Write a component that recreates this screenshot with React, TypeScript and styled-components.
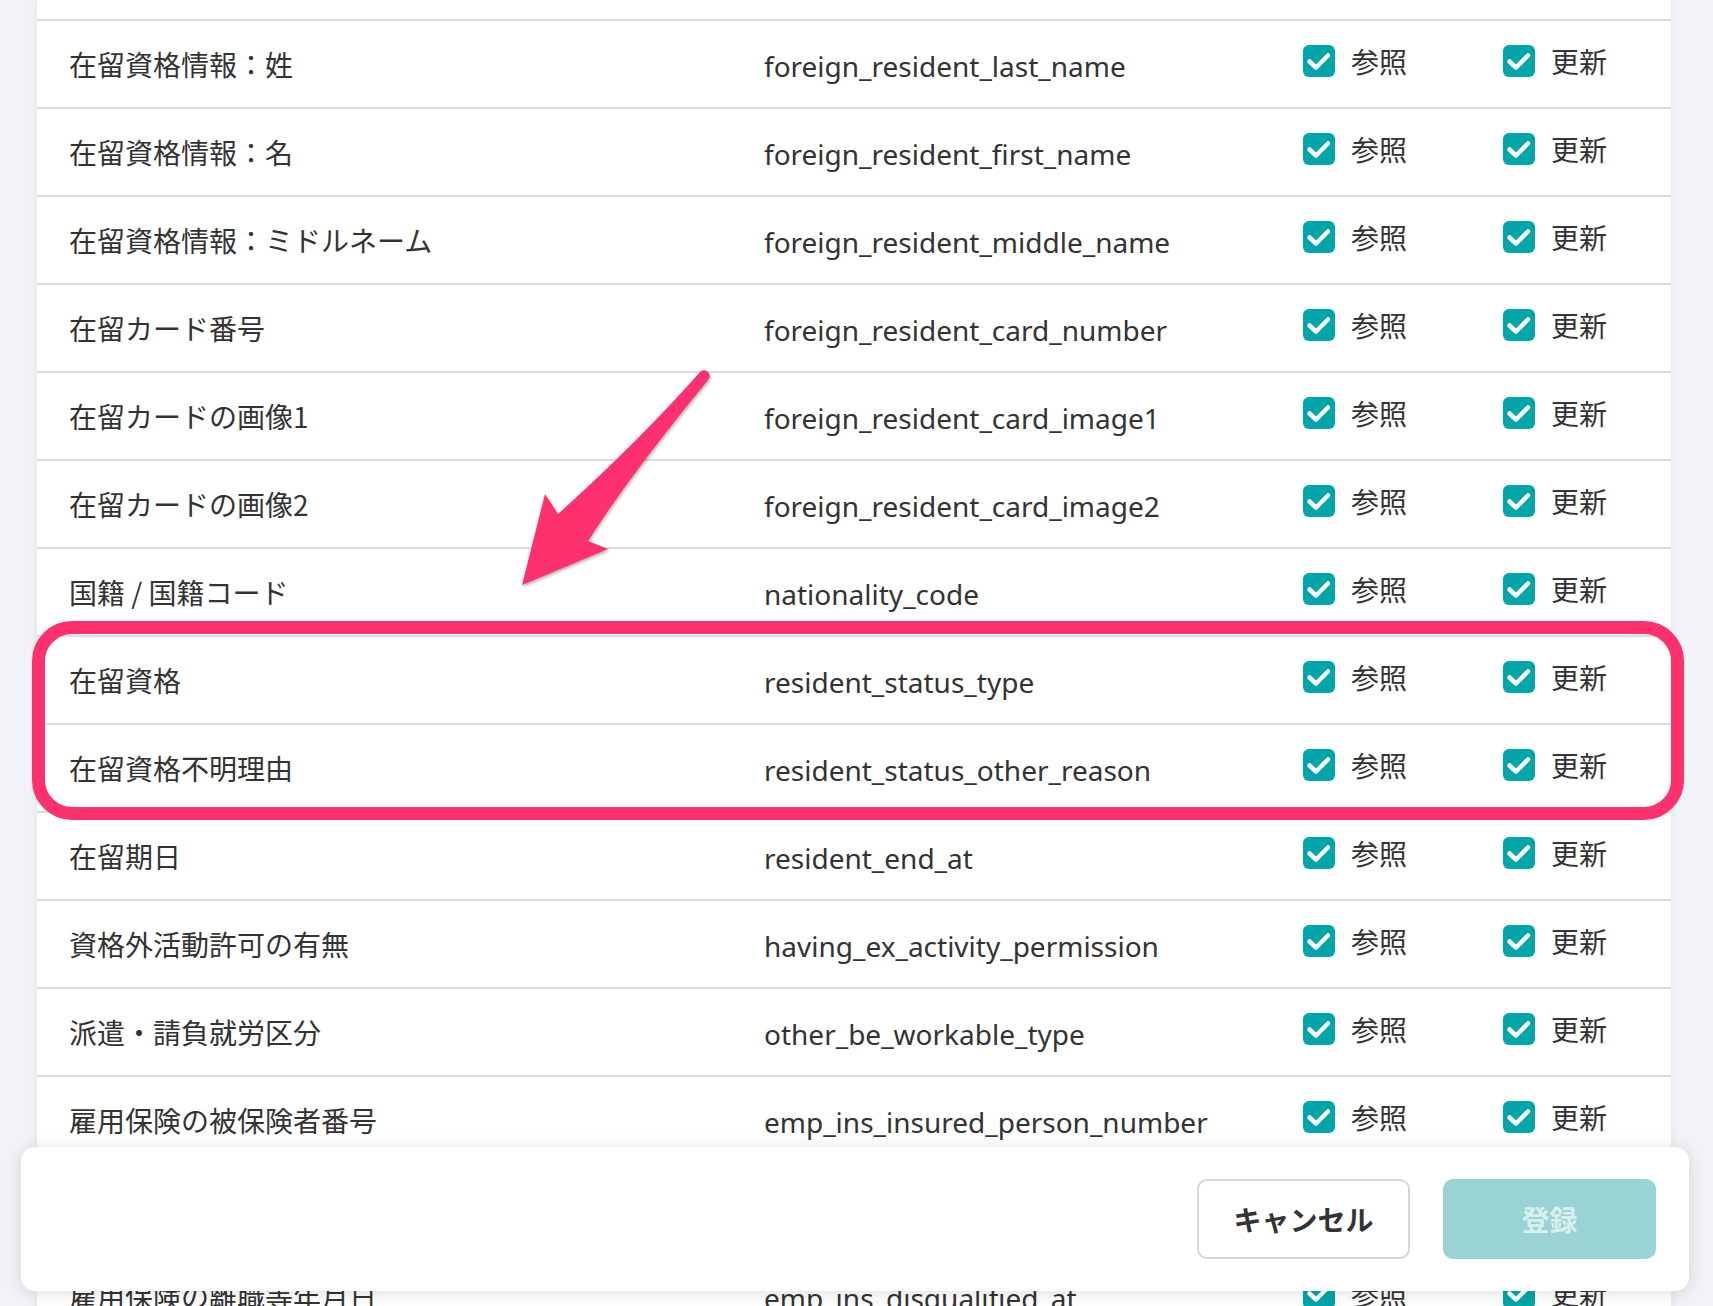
import React from "react";
import styled, { createGlobalStyle } from "styled-components";

const GlobalStyle = createGlobalStyle`
  html, body {
    margin: 0;
    padding: 0;
    background: #f2f3f7;
  }
  body {
    font-family: "Noto Sans", "Noto Sans CJK JP", sans-serif;
    color: #333;
  }
  * { box-sizing: border-box; }
`;

const Page = styled.div`
  position: relative;
  height: 1306px;
  overflow: hidden;
  background: #f2f3f7;
  padding: 0 42px 0 37px;
`;

const Card = styled.div`
  background: #fff;
  box-shadow: 0 0 10px rgba(0, 0, 0, 0.07);
`;

const RowTail = styled.div`
  height: 21px;
  border-bottom: 2px solid #dcdcdc;
`;

const Row = styled.div`
  display: grid;
  grid-template-columns: 695px 539px 200px 1fr;
  align-items: center;
  height: 88px;
  padding-left: 32px;
  border-bottom: 2px solid #dcdcdc;
  font-size: 28px;
  line-height: 1;
`;

const Label = styled.div`
  font-family: "Noto Sans CJK JP", sans-serif;
  color: #333;
  white-space: nowrap;
`;

const Field = styled.div`
  font-family: "Noto Sans", "Noto Sans CJK JP", sans-serif;
  color: #333;
  padding-top: 3px;
  white-space: nowrap;
`;

const CheckCell = styled.label`
  display: flex;
  align-items: center;
  gap: 16px;
  margin-bottom: 6px;
  font-family: "Noto Sans CJK JP", sans-serif;
  color: #333;
`;

const Footer = styled.div`
  position: absolute;
  left: 21px;
  right: 24px;
  bottom: 15px;
  height: 144px;
  background: #fff;
  border-radius: 14px;
  box-shadow: 0 2px 18px rgba(0, 0, 0, 0.13);
  display: flex;
  justify-content: flex-end;
  align-items: center;
  gap: 33px;
  padding: 0 33px;
`;

const Button = styled.button<{ $primary?: boolean }>`
  width: 213px;
  height: 80px;
  border-radius: 10px;
  font-family: "Noto Sans CJK JP", sans-serif;
  font-weight: 700;
  font-size: 28px;
  cursor: pointer;
  border: ${(p) => (p.$primary ? "none" : "2px solid #d6d6d6")};
  background: ${(p) => (p.$primary ? "#99d3d4" : "#fff")};
  color: ${(p) => (p.$primary ? "#d8efef" : "#333")};
`;

const Highlight = styled.div`
  position: absolute;
  left: 32px;
  top: 621px;
  width: 1652px;
  height: 199px;
  border: 13px solid #ff306e;
  border-radius: 40px;
  pointer-events: none;
`;

const Arrow = styled.svg`
  position: absolute;
  left: 500px;
  top: 360px;
  width: 220px;
  height: 240px;
  overflow: visible;
  filter: drop-shadow(1px 2px 1.5px rgba(0, 0, 0, 0.3));
  pointer-events: none;
`;

const CheckIcon = () => (
  <svg width="32" height="32" viewBox="0 0 32 32">
    <rect x="0" y="0" width="32" height="32" rx="6" fill="#00a5a9" />
    <path
      d="M6.5 16.5 L13 22.5 L25 10.5"
      fill="none"
      stroke="#fff"
      strokeWidth="4.5"
      strokeLinecap="round"
      strokeLinejoin="round"
    />
  </svg>
);

const rows: [string, string][] = [
  ["在留資格情報：姓", "foreign_resident_last_name"],
  ["在留資格情報：名", "foreign_resident_first_name"],
  ["在留資格情報：ミドルネーム", "foreign_resident_middle_name"],
  ["在留カード番号", "foreign_resident_card_number"],
  ["在留カードの画像1", "foreign_resident_card_image1"],
  ["在留カードの画像2", "foreign_resident_card_image2"],
  ["国籍 / 国籍コード", "nationality_code"],
  ["在留資格", "resident_status_type"],
  ["在留資格不明理由", "resident_status_other_reason"],
  ["在留期日", "resident_end_at"],
  ["資格外活動許可の有無", "having_ex_activity_permission"],
  ["派遣・請負就労区分", "other_be_workable_type"],
  ["雇用保険の被保険者番号", "emp_ins_insured_person_number"],
  ["雇用保険の資格取得年月日", "emp_ins_qualified_at"],
  ["雇用保険の離職等年月日", "emp_ins_disqualified_at"],
];

export default function App() {
  return (
    <>
      <GlobalStyle />
      <Page>
        <Card>
          <RowTail />
          {rows.map(([label, field]) => (
            <Row key={field}>
              <Label>{label}</Label>
              <Field>{field}</Field>
              <CheckCell>
                <CheckIcon />
                参照
              </CheckCell>
              <CheckCell>
                <CheckIcon />
                更新
              </CheckCell>
            </Row>
          ))}
        </Card>
        <Highlight />
        <Arrow viewBox="0 0 220 240">
          <path
            d="M200 12 Q140 80 58 154 L45 134 L22 225 L108 189 L88 181 Q130 115 208 20 A5.6 5.6 0 0 0 200 12 Z"
            fill="#ff306e"
          />
        </Arrow>
        <Footer>
          <Button>キャンセル</Button>
          <Button $primary>登録</Button>
        </Footer>
      </Page>
    </>
  );
}
